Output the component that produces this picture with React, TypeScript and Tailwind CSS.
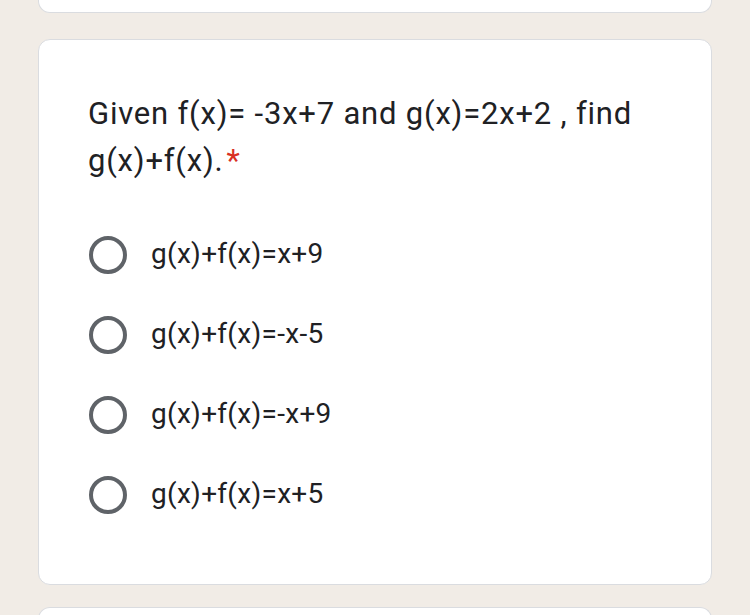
import React from "react";

const options = ["g(x)+f(x)=x+9", "g(x)+f(x)=-x-5", "g(x)+f(x)=-x+9", "g(x)+f(x)=x+5"];

export default function App() {
  return (
    <div className="w-[750px] h-[615px] overflow-hidden bg-[#f1ece6] px-[38px]" style={{ fontFamily: "Roboto, 'Open Sans', sans-serif" }}>
      <div className="h-[13px] bg-white border-x border-b border-[#dadce0] rounded-b-[12px]" />
      <div className="mt-[26px] h-[546px] bg-white border border-[#dadce0] rounded-[12px] pl-[49px] pt-[50px]">
        <div className="text-[31px] leading-[47px] tracking-[0.8px] text-[#202124] pr-[40px]">
          Given f(x)= -3x+7 and g(x)=2x+2 , find g(x)+f(x).<span className="ml-[3px] text-[#d93025]">*</span>
        </div>
        <div className="mt-[52px] flex flex-col gap-[42px]">
          {options.map((o) => (
            <div key={o} className="flex items-center h-[38px]">
              <div className="ml-[1px] w-[38px] h-[38px] rounded-full border-[4px] border-[#5f6368] shrink-0" />
              <div className="ml-[24px] text-[28px] leading-[32px] tracking-[0.3px] text-[#202124] -mt-[2px]">{o}</div>
            </div>
          ))}
        </div>
      </div>
      <div className="mt-[22px] h-[20px] bg-white border-x border-t border-[#dadce0] rounded-t-[12px]" />
    </div>
  );
}
